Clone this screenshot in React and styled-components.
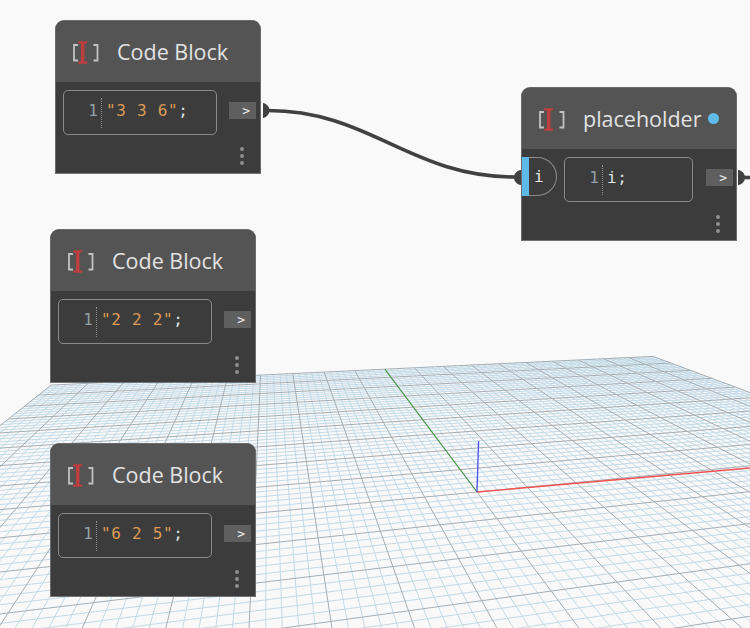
import React from 'react';
import styled, { createGlobalStyle } from 'styled-components';

const GlobalStyle = createGlobalStyle`
  html, body {
    margin: 0;
    padding: 0;
    background: #f9f9f9;
  }
`;

// Ground plane projection, taken from the vanishing points of the picture
const ORIGIN = { x: 477, y: 492 };
const VP_X = { x: 3100, y: 240 };
const VP_Y = { x: 268, y: 213 };
const FAR_GREEN = { x: 385, y: 369 };
const FAR_CORNER = { x: 653, y: 356 };
const MAJORS_X = 10;
const MAJORS_Y = 9;
const MINORS = 5;
const NEAR_EDGE = -0.9;

const t = (ORIGIN.x - FAR_GREEN.x) / (ORIGIN.x - VP_Y.x);
const beta = t / (1 - t);
const alpha =
  (FAR_CORNER.x * (beta + 1) - beta * VP_Y.x - ORIGIN.x) / (VP_X.x - FAR_CORNER.x);

const project = (u, v) => {
  const w = alpha * u + beta * v + 1;
  return [
    ((alpha * u * VP_X.x + beta * v * VP_Y.x + ORIGIN.x) / w).toFixed(1),
    ((alpha * u * VP_X.y + beta * v * VP_Y.y + ORIGIN.y) / w).toFixed(1)
  ];
};

const buildGrid = isMajor => {
  const totalX = MAJORS_X * MINORS;
  const totalY = MAJORS_Y * MINORS;
  let d = '';
  for (let i = -totalX; i <= totalX; i++) {
    if ((i % MINORS === 0) !== isMajor) continue;
    const a = project(i / totalX, NEAR_EDGE);
    const b = project(i / totalX, 1);
    d += `M${a[0]} ${a[1]}L${b[0]} ${b[1]}`;
  }
  for (let j = -totalY; j <= totalY; j++) {
    if ((j % MINORS === 0) !== isMajor || j / totalY < NEAR_EDGE) continue;
    const c = project(-1, j / totalY);
    const e = project(1, j / totalY);
    d += `M${c[0]} ${c[1]}L${e[0]} ${e[1]}`;
  }
  return d;
};

const minorGrid = buildGrid(false);
const majorGrid = buildGrid(true);

const NODE_LIST = [
  { id: 1, x: 55, y: 20, title: 'Code Block', code: '"3 3 6"' },
  { id: 2, x: 50, y: 229, title: 'Code Block', code: '"2 2 2"' },
  { id: 3, x: 50, y: 443, title: 'Code Block', code: '"6 2 5"' }
];

//Style
const Canvas = styled.div`
  position: relative;
  width: 750px;
  height: 628px;
  overflow: hidden;
  background: #f9f9f9;
`;
const Scene = styled.svg`
  position: absolute;
  left: 0;
  top: 0;
`;
const NodeWrapper = styled.section`
  position: absolute;
  left: ${props => props.$x}px;
  top: ${props => props.$y}px;
  width: ${props => props.$width}px;
  height: 154px;
  display: flex;
  flex-direction: column;
  box-sizing: border-box;
  border: 1px solid #6b6b6b;
  border-bottom-color: #747474;
  border-radius: 9px 9px 0 0;
  background: #3c3c3c;
  overflow: hidden;
`;
const Header = styled.header`
  height: 61px;
  flex: none;
  display: flex;
  align-items: center;
  padding-left: 15px;
  background: #545454;
`;
const Title = styled.h2`
  margin: 0 0 0 16px;
  font-family: 'Open Sans', sans-serif;
  font-size: 21.5px;
  font-weight: 400;
  color: #e2e2e2;
  white-space: nowrap;
`;
const Frozen = styled.span`
  width: 11px;
  height: 11px;
  margin-left: 7px;
  border-radius: 50%;
  background: #5fbbe9;
`;
const Body = styled.div`
  display: flex;
  padding: 8px 0 0 ${props => (props.$hasInput ? 0 : 7)}px;
`;
const InputPort = styled.div`
  height: 39px;
  flex: none;
  display: flex;
  margin-right: 7px;
`;
const PortBar = styled.span`
  width: 7px;
  background: #5fb9e6;
`;
const PortLabel = styled.span`
  width: 28px;
  box-sizing: border-box;
  padding-left: 5px;
  display: flex;
  align-items: center;
  border: 1.4px solid #8c8c8c;
  border-left: none;
  border-radius: 0 20px 20px 0;
  font-family: 'DejaVu Sans Mono', monospace;
  font-size: 16px;
  color: #e4e4e4;
`;
const CodeBox = styled.div`
  width: ${props => props.$width}px;
  height: 45px;
  flex: none;
  box-sizing: border-box;
  display: flex;
  align-items: center;
  padding-left: 9px;
  border: 1.5px solid #8a8a8a;
  border-radius: 5px;
  font-family: 'DejaVu Sans Mono', monospace;
  font-size: 16px;
  letter-spacing: 0.7px;
  white-space: pre;
`;
const Gutter = styled.span`
  width: 25px;
  height: 26px;
  flex: none;
  display: flex;
  align-items: center;
  justify-content: flex-end;
  padding: 0 3px 4px 0;
  margin-right: 4px;
  border-right: 1px dotted #8e8e8e;
  color: #93a0a6;
  letter-spacing: 0;
  box-sizing: content-box;
`;
const CodeLine = styled.span`
  margin-bottom: 4px;
`;
const Str = styled.span`
  color: #dc9a55;
`;
const Plain = styled.span`
  color: #dfe3e6;
`;
const OutputPort = styled.div`
  width: 27px;
  height: 17px;
  flex: none;
  margin: 12px 0 0 ${props => props.$gap}px;
  display: flex;
  align-items: center;
  justify-content: flex-end;
  padding-right: 6px;
  box-sizing: border-box;
  background: #5f5f5f;
  font-family: 'DejaVu Sans Mono', monospace;
  font-size: 13px;
  color: #eeeeee;
`;
const Footer = styled.div`
  flex: 1;
  display: flex;
  justify-content: flex-end;
  padding: ${props => props.$top}px 16px 0 0;
`;
const Dots = styled.div`
  display: flex;
  flex-direction: column;
  gap: 3px;
`;
const Dot = styled.i`
  width: 4px;
  height: 4px;
  border-radius: 50%;
  background: #8f8f8f;
`;

const NodeIcon = () => (
  <svg width="30" height="24" viewBox="0 0 30 24" style={{ flex: 'none' }}>
    <path d="M7 5H3V20.5H7M22.5 5H26.5V20.5H22.5" fill="none" stroke="#c2c2c2" strokeWidth="1.8" />
    <path d="M7.2 2.4H16.2M7.2 22.6H16.2" fill="none" stroke="#bd3e3e" strokeWidth="2.2" />
    <path d="M11.7 2.5V22.5" fill="none" stroke="#bd3e3e" strokeWidth="3.6" />
  </svg>
);

const CodeNode = ({ x, y, width, title, boxWidth, hasInput, frozen, outGap, children }) => (
  <NodeWrapper $x={x} $y={y} $width={width}>
    <Header>
      <NodeIcon />
      <Title>{title}</Title>
      {frozen && <Frozen />}
    </Header>
    <Body $hasInput={hasInput}>
      {hasInput && (
        <InputPort>
          <PortBar />
          <PortLabel>i</PortLabel>
        </InputPort>
      )}
      <CodeBox $width={boxWidth}>
        <Gutter>1</Gutter>
        <CodeLine>{children}</CodeLine>
      </CodeBox>
      <OutputPort $gap={outGap}>&gt;</OutputPort>
    </Body>
    <Footer $top={hasInput ? 13 : 12}>
      <Dots>
        <Dot />
        <Dot />
        <Dot />
      </Dots>
    </Footer>
  </NodeWrapper>
);

const App = () => (
  <Canvas>
    <GlobalStyle />
    <Scene width="750" height="628" viewBox="0 0 750 628">
      <path d={minorGrid} fill="none" stroke="#c3dae7" strokeWidth="1" />
      <path d={majorGrid} fill="none" stroke="#a3aeb5" strokeWidth="1" />
      <path d="M385 369.3L477 492" stroke="#4f9a4f" strokeWidth="1.2" />
      <path d="M477 492L750 468" stroke="#f25252" strokeWidth="1.3" />
      <path d="M477 492L478.6 441" stroke="#4a4cf0" strokeWidth="1.3" />

      <path d="M268 110.5C370 110.5 410 177 515 177" fill="none" stroke="#414141" strokeWidth="3.6" />
      <path d="M263 103V118C266 118 269.5 114 269.5 110.5C269.5 107 266 103 263 103Z" fill="#414141" />
      <path d="M521 170V185C517 185 514 181 514 177.5C514 174 517 170 521 170Z" fill="#414141" />
      <path d="M738 170V185C742 185 745 181 745 177.5C745 174 742 170 738 170Z" fill="#414141" />
      <path d="M744 177.5H750" stroke="#414141" strokeWidth="3.6" />
    </Scene>

    {NODE_LIST.map(node => (
      <CodeNode key={node.id} x={node.x} y={node.y} width={206} title={node.title} boxWidth={154} outGap={12}>
        <Str>{node.code}</Str>
        <Plain>;</Plain>
      </CodeNode>
    ))}

    <CodeNode x={521} y={87} width={216} title="placeholder" boxWidth={129} hasInput frozen outGap={13}>
      <Plain>i;</Plain>
    </CodeNode>
  </Canvas>
);

export default App;
